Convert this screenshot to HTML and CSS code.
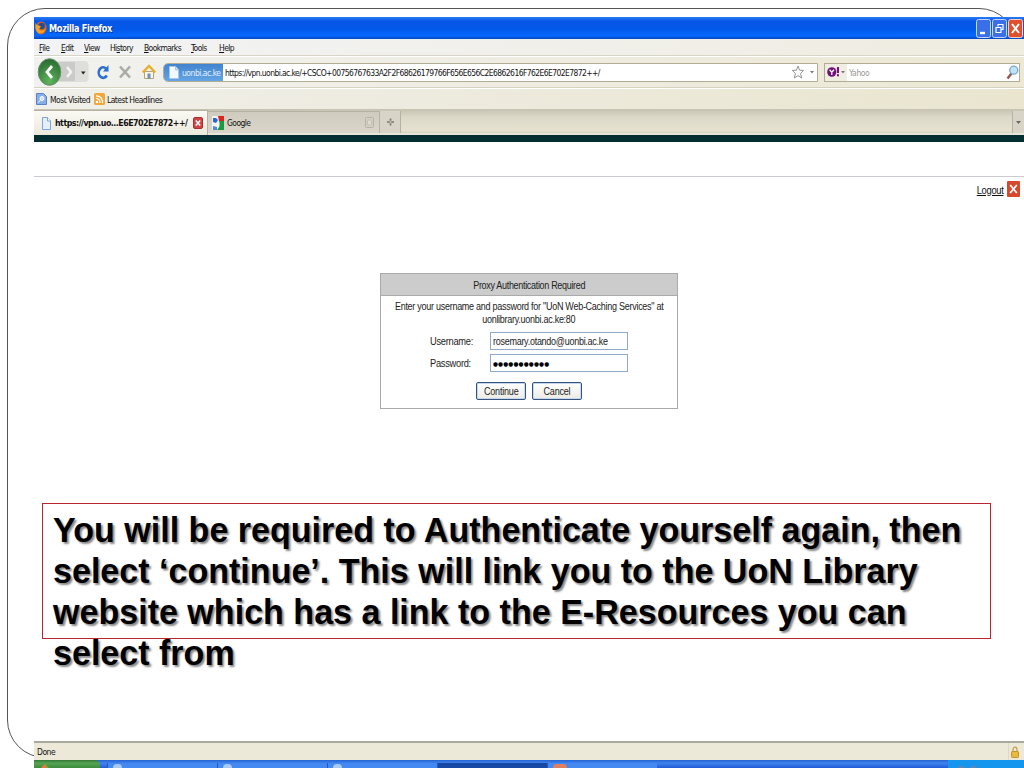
FILE: index.html
```
<!DOCTYPE html>
<html>
<head>
  <meta charset="utf-8">
  <title>Mozilla Firefox</title>
  <link rel="stylesheet" href="styles.css">
</head>
<body>
<div class="frame"></div>
<div class="window">

  <div class="titlebar">
    <svg class="fox" width="12" height="14" viewBox="0 0 12 14"><ellipse cx="6" cy="7" rx="5.600" ry="6.500" fill="#d8661a"/><circle cx="6.600" cy="5" r="3.300" fill="#284a98"/><path d="M.5 2q1 3 3.500 2.500l2 1-2 2.500q2 3 6.500 0-1.500 4.500-6 4.500Q-.5 11 .5 2z" fill="#f6a623"/></svg>
    <span class="t title">Mozilla Firefox</span>
    <div class="winbtns">
      <svg width="15" height="19" viewBox="0 0 15 19"><rect x=".5" y=".5" width="14" height="18" rx="2" fill="#3b6fe8" stroke="#c5d5fa"/><path d="M4 14h5" stroke="#fff" stroke-width="2.400"/></svg>
      <svg width="15" height="19" viewBox="0 0 15 19"><rect x=".5" y=".5" width="14" height="18" rx="2" fill="#3b6fe8" stroke="#c5d5fa"/><path d="M6 7.500V5.500h5v5H9.500M4 8.500h5v5H4z" fill="none" stroke="#fff" stroke-width="1.200"/></svg>
      <svg width="15" height="19" viewBox="0 0 15 19"><rect x=".5" y=".5" width="14" height="18" rx="2" fill="#e0502c" stroke="#f4d0c4"/><path d="M4 5l7 9M11 5l-7 9" stroke="#fff" stroke-width="2"/></svg>
    </div>
  </div>

  <div class="menu">
    <span class="t m1"><u>F</u>ile</span>
    <span class="t m2"><u>E</u>dit</span>
    <span class="t m3"><u>V</u>iew</span>
    <span class="t m4">Hi<u>s</u>tory</span>
    <span class="t m5"><u>B</u>ookmarks</span>
    <span class="t m6"><u>T</u>ools</span>
    <span class="t m7"><u>H</u>elp</span>
  </div>

  <div class="nav">
    <svg class="backfwd" width="54" height="28" viewBox="0 0 54 28">
      <defs><radialGradient id="g" cx=".5" cy=".85" r=".8"><stop offset="0" stop-color="#5fb55c"/><stop offset="1" stop-color="#2a6e33"/></radialGradient></defs>
      <rect x="14" y="3" width="39.500" height="21" rx="4" fill="#dededb"/>
      <rect x="22" y="4" width="18" height="19" fill="#cbcbc9"/>
      <path d="M32 9l4 5-4 5" fill="none" stroke="#f4f4f2" stroke-width="2.500"/>
      <path d="M46 13.500h4.500L48.200 16.500z" fill="#222"/>
      <ellipse cx="14.500" cy="14" rx="11.300" ry="13.300" fill="url(#g)" stroke="#6d8f6e"/>
      <path d="M17 8l-5 6 5 6" fill="none" stroke="#fff" stroke-width="2.800"/>
    </svg>
    <svg class="reload" width="14" height="16" viewBox="0 0 14 16"><path d="M10.800 11.500A4.400 5.300 0 1 1 10 4.500" fill="none" stroke="#2c6fd0" stroke-width="2.600"/><path d="M12.500 1v6.500H7z" fill="#2c6fd0"/></svg>
    <svg class="stop" width="12" height="14" viewBox="0 0 12 14"><path d="M1 1.500l10 11M11 1.500l-10 11" stroke="#aaaaa6" stroke-width="2.600"/></svg>
    <svg class="home" width="14" height="16" viewBox="0 0 14 16"><path d="M2.500 7.500h9v7h-9z" fill="#fdf6dc" stroke="#b3a378"/><path d="M.8 8.500L7 2l6.200 6.500" fill="none" stroke="#e5b02f" stroke-width="2.400"/><path d="M5.500 9.500h3v5h-3z" fill="#6990c8"/></svg>
    <div class="url">
      <div class="site">
        <svg width="10" height="13" viewBox="0 0 10 13"><path d="M.5.5h6l3 3.500v8.500h-9z" fill="#f3f8ff" stroke="#a7c5ea"/><path d="M6.500.5v3.500h3" fill="#cfe0f6" stroke="#a7c5ea"/></svg>
        <span class="t domain">uonbi.ac.ke</span>
      </div>
      <span class="t address">https://vpn.uonbi.ac.ke/+CSCO+00756767633A2F2F68626179766F656E656C2E6862616F762E6E702E7872++/</span>
      <svg class="star" width="25" height="14" viewBox="0 0 25 14"><path d="M6 1l1.600 4.200 4.100.2-3.100 3 1 4.600L6 10.600 2.400 13l1-4.600-3.100-3 4.100-.2z" fill="#fff" stroke="#888" stroke-width=".9"/><path d="M18 6h4l-2 2.600z" fill="#777"/></svg>
    </div>
    <div class="search">
      <div class="engine">
        <svg width="18" height="12" viewBox="0 0 18 12"><ellipse cx="4.800" cy="6" rx="4.600" ry="4.800" fill="#71107d"/><path d="M2.600 3.800l2.200 2.400 2.200-2.400M4.800 6v3" stroke="#fff" stroke-width="1.300" fill="none"/><path d="M11 1v6M11 8.300v2" stroke="#71107d" stroke-width="2"/><path d="M14 5h4l-2 2.600z" fill="#777"/></svg>
      </div>
      <span class="t yahoo">Yahoo</span>
      <svg class="lens" width="13" height="15" viewBox="0 0 13 15"><path d="M5.500 8.500L1.500 13.500" stroke="#96594a" stroke-width="2.500"/><circle cx="7.800" cy="5.200" r="4" fill="#bfe3f8" stroke="#7aa6c9" stroke-width="1.300"/></svg>
    </div>
  </div>

  <div class="bookmarks">
    <svg width="11" height="12" viewBox="0 0 11 12"><path d="M.5.5h7l3 3v8H.5z" fill="#88aee8" stroke="#5b82c6"/><circle cx="6" cy="5.500" r="2" fill="#cfe0fb" stroke="#fff"/><path d="M4.500 7L2.500 9.500" stroke="#fff"/></svg>
    <span class="t visited">Most Visited</span>
    <svg width="11" height="12" viewBox="0 0 11 12"><rect width="11" height="12" rx="1.500" fill="#f0a83c"/><circle cx="3" cy="9" r="1.200" fill="#fff"/><path d="M2 5.500q4 0 4 4.500M2 2.800q6.600 0 6.600 7.200" fill="none" stroke="#fff" stroke-width="1.200"/></svg>
    <span class="t headlines">Latest Headlines</span>
  </div>

  <div class="tabs">
    <div class="tab active">
      <svg width="9" height="13" viewBox="0 0 9 13"><path d="M.5.5h5l3 3.500v8.500h-8z" fill="#e4effc" stroke="#7fa5d8"/><path d="M5.500.5v3.500h3" fill="#fff" stroke="#7fa5d8"/></svg>
      <span class="t tabname">https://vpn.uo...E6E702E7872++/</span>
      <svg width="10" height="12" viewBox="0 0 10 12"><rect x=".5" y=".5" width="9" height="11" rx="1.500" fill="#cf4444" stroke="#a92f35"/><path d="M2.800 3.500l4.400 5M7.200 3.500l-4.400 5" stroke="#fff" stroke-width="1.500"/></svg>
    </div>
    <div class="tab">
      <svg width="12" height="14" viewBox="0 0 12 14"><rect width="12" height="14" fill="#f4f4f4"/><path d="M6 0h6v5H7z" fill="#d8281f"/><path d="M7 5h5v9H5q4-4 2-9z" fill="#1b9a41"/><path d="M1 2h3l2 2-2 3-3-1z" fill="#2a68cf"/><path d="M1 10l4 1v3H1z" fill="#4c8be0"/></svg>
      <span class="t google">Google</span>
      <svg class="tabclose" width="9" height="11" viewBox="0 0 9 11"><rect x=".5" y=".5" width="8" height="10" rx="1" fill="#d3d0c3" stroke="#b5b2a6"/><rect x="2.500" y="3" width="4" height="5" rx="1" fill="#dedbd0" stroke="#c2bfb3"/></svg>
    </div>
    <div class="newtab"><svg width="7" height="8" viewBox="0 0 7 8"><path d="M3.500.5v7M0 4h7" stroke="#77756c" stroke-width="1.600"/><path d="M3.500 2.500v3M2 4h3" stroke="#dddacd" stroke-width=".6"/></svg></div>
    <div class="tablist"><svg width="5" height="3" viewBox="0 0 5 3"><path d="M0 0h5L2.500 3z" fill="#666"/></svg></div>
  </div>

  <div class="page">
    <div class="band"></div>
    <div class="header"></div>
    <div class="logout">
      <a class="t">Logout</a>
      <svg width="13" height="16" viewBox="0 0 13 16"><rect width="13" height="16" rx="1" fill="#d5492f"/><path d="M3.200 4l6.600 8M9.800 4l-6.600 8" stroke="#fff" stroke-width="1.700"/></svg>
    </div>

    <div class="login">
      <div class="login-title"><span class="t">Proxy Authentication Required</span></div>
      <div class="login-text"><span class="t">Enter your username and password for "UoN Web-Caching Services" at</span><br><span class="t">uonlibrary.uonbi.ac.ke:80</span></div>
      <div class="row"><span class="t label">Username:</span><div class="field"><span class="t">rosemary.otando@uonbi.ac.ke</span></div></div>
      <div class="row"><span class="t label">Password:</span><div class="field"><span class="t dots">●●●●●●●●●●●</span></div></div>
      <div class="buttons"><div class="btn"><span class="t">Continue</span></div><div class="btn"><span class="t">Cancel</span></div></div>
    </div>

    <div class="callout">
      <span>You will be required to Authenticate yourself again, then</span>
      <span>select ‘continue’. This will link you to the UoN Library</span>
      <span>website which has a link to the E-Resources you can</span>
      <span>select from</span>
    </div>
  </div>

  <div class="status">
    <span class="t">Done</span>
    <div class="lock"><svg width="8" height="12" viewBox="0 0 8 12"><path d="M2 6V3.500a2 2.300 0 0 1 4 0V6" fill="none" stroke="#c9a145" stroke-width="1.300"/><rect x=".5" y="5.500" width="7" height="6" rx=".8" fill="#e9b93c" stroke="#c3922b"/></svg></div>
  </div>

  <div class="taskbar">
    <div class="start"><svg width="9" height="4" viewBox="0 0 9 4"><path d="M0 4l2-2.500L5 0v4z" fill="#e8773a"/><path d="M5 4V1l3 3z" fill="#79a83c"/></svg></div>
    <div class="task"><i></i></div>
    <div class="task"><i></i></div>
    <div class="task"><i></i></div>
    <div class="task current"></div>
    <div class="task ff"><i></i></div>
    <div class="tray"><i></i><i></i></div>
  </div>
</div>
</body>
</html>
```

FILE: styles.css
```
* { box-sizing: border-box; }
body { margin: 0; width: 1024px; height: 768px; overflow: hidden; background: #fff; color: #111; font-family: "DejaVu Sans Condensed", "DejaVu Sans", sans-serif; font-size: 9px; position: relative; }
svg { display: block; flex: none; }
/* the window is squeezed sideways, so its text is narrower than the font */
.t { white-space: nowrap; display: inline-block; flex: none; transform: scaleX(0.94); transform-origin: left center; }

/* rounded outline of the slide, runs behind the window */
.frame { position: absolute; left: 7px; top: 8px; width: 1010px; height: 750px; border: 1px solid #555; border-radius: 38px; }
.window { position: relative; margin: 0 0 0 34px; top: 17px; width: 990px; height: 751px; display: flex; flex-direction: column; background: #fff; }

.titlebar { height: 22px; flex: none; display: flex; align-items: center; padding: 0 1px; background: linear-gradient(#2a7bf5 0, #0656e6 20%, #0459ea 55%, #0668ff 85%, #0347c0 100%); }
.title { color: #fff; font-weight: bold; font-size: 10px; margin-left: 2px; letter-spacing: -0.35px; text-shadow: 1px 1px 0 #0a3a9c; transform: scaleX(0.91); }
.winbtns { margin-left: auto; display: flex; gap: 1px; }

.menu { height: 17px; flex: none; display: flex; align-items: center; padding: 2px 0 0 5px; background: linear-gradient(90deg, #f2f3f5, #efece0); border-bottom: 1px solid #d8d5c6; letter-spacing: -0.65px; }
.m1 { width: 22px; }
.m2 { width: 23px; }
.m3 { width: 26px; }
.m4 { width: 34px; }
.m5 { width: 47px; }
.m6 { width: 28px; }

.nav { height: 32px; flex: none; display: flex; align-items: center; padding-right: 4px; border-top: 1px solid #fff; border-bottom: 1px solid #d5d2c2; background: linear-gradient(90deg, #f1f1ef, #ece8d4); }
.backfwd { margin-left: 1px; }
.reload { margin-left: 7px; }
.stop { margin-left: 9px; }
.home { margin-left: 11px; }
.url { height: 19px; width: 656px; margin-left: 7px; display: flex; align-items: center; background: #fff; border: 1px solid #b3ac92; border-radius: 5px 0 0 5px; overflow: hidden; }
.site { width: 59px; height: 19px; flex: none; display: flex; align-items: center; padding-left: 5px; background: linear-gradient(#3f82cd, #65a7e6); color: #e3f0ff; }
.domain { margin: 2px 0 0 3px; letter-spacing: -0.5px; }
.address { margin: 2px 0 0 2px; letter-spacing: -0.62px; }
.star { margin-left: auto; margin-right: 0; }
.search { height: 19px; width: 196px; margin-left: 6px; display: flex; align-items: center; background: #fff; border: 1px solid #b3ac92; }
.engine { height: 17px; width: 22px; padding-left: 2px; display: flex; align-items: center; background: #f0ede3; }
.yahoo { color: #999; margin: 2px 0 0 2px; letter-spacing: -0.4px; }
.lens { margin-left: auto; }

.bookmarks { height: 21px; flex: none; display: flex; align-items: center; padding-left: 2px; border-top: 1px solid #fff; background: linear-gradient(90deg, #f0efe9, #e9e5cf); }
.visited { width: 44px; margin: 2px 0 0 3px; letter-spacing: -0.55px; }
.headlines { margin: 2px 0 0 2px; letter-spacing: -0.55px; }

.tabs { height: 26px; flex: none; display: flex; align-items: flex-start; border-bottom: 2px solid #e9e6d9; background: linear-gradient(#c5c2b2, #dcd9c9 35%, #e6e2d0 90%, #d8d4c3); background-clip: padding-box; }
.tab { height: 22px; width: 172px; margin-top: 2px; display: flex; align-items: center; padding: 0 5px 0 4px; background: linear-gradient(#cfccbf, #dad7ca); border: 1px solid #b5b2a3; border-width: 1px 1px 0 0; }
.active { height: 25px; width: 174px; margin-top: 1px; padding: 0 0 0 8px; background: linear-gradient(#faf9f4, #ece9dc); }
.tabname { width: 134px; font-weight: bold; margin: 0 4px 0 4px; letter-spacing: -0.52px; transform: scaleX(0.975); }
.google { margin-left: 3px; letter-spacing: -0.6px; }
.tabclose { margin-left: auto; }
.newtab { height: 22px; width: 21px; margin-top: 2px; display: flex; align-items: center; justify-content: center; background: #d8d5c8; border-right: 1px solid #b5b2a3; }
.tablist { height: 22px; width: 12px; margin: 2px 0 0 auto; display: flex; align-items: center; justify-content: center; background: #d8d5c8; border-left: 1px solid #b5b2a3; }

.page { flex: 1; min-height: 0; display: flex; flex-direction: column; font-family: "Liberation Sans", Arial, sans-serif; }
.band { height: 7px; flex: none; background: #032f33; }
.header { height: 35px; flex: none; border-bottom: 1px solid #c9cbd0; }
.logout { height: 24px; flex: none; display: flex; align-items: center; justify-content: flex-end; gap: 4px; padding-right: 4px; font-size: 10px; letter-spacing: -0.35px; text-decoration: underline; }
.logout .t { transform-origin: right center; margin-top: 2px; }

.login { width: 298px; height: 136px; flex: none; margin: 72px 0 0 346px; border: 1px solid #aaa; font-size: 10px; color: #222; }
.login .t { transform: scaleX(0.9); transform-origin: center; }
.login-title { height: 22px; display: flex; align-items: center; justify-content: center; padding-top: 1px; background: #ccc; border-bottom: 1px solid #aaa; letter-spacing: -0.35px; }
.login-text { margin: 0 -10px; padding-top: 4px; height: 36px; line-height: 13px; text-align: center; letter-spacing: -0.3px; }
.row { display: flex; align-items: center; height: 18px; margin-bottom: 4px; padding-left: 49px; }
.row .t { transform-origin: left center; }
.login .label { width: 60px; letter-spacing: -0.3px; transform: scaleX(0.93); }
.field { width: 138px; height: 18px; padding-left: 2px; display: flex; align-items: center; border: 1px solid #8fa9c6; background: #fff; letter-spacing: -0.3px; }
.login .dots { font-family: "DejaVu Sans", sans-serif; font-size: 6px; letter-spacing: 0.15px; color: #000; margin-top: 1px; transform: scaleX(0.95); }
.buttons { display: flex; gap: 6px; padding: 6px 0 0 95px; }
.btn { width: 50px; height: 18px; display: flex; align-items: center; justify-content: center; padding-top: 1px; border: 1px solid #33557d; border-radius: 2px; background: linear-gradient(#fff, #ecebe5); box-shadow: inset 0 0 0 1px #c5d6ee; letter-spacing: -0.2px; }

.callout { width: 949px; height: 136px; flex: none; margin: 94px 0 0 8px; padding: 5px 0 0 10px; border: 1px solid #bb2530; color: #000; font-size: 35px; line-height: 41px; font-weight: bold; white-space: nowrap; text-shadow: 2px 2px 2px #888; }
.callout span { display: block; transform: scaleX(0.973); transform-origin: left center; }

.status { height: 19px; flex: none; display: flex; align-items: center; padding: 0 3px; background: #ece9d8; border-top: 2px solid #aaa99f; letter-spacing: -0.5px; }
.lock { margin-left: auto; height: 17px; width: 13px; display: flex; align-items: center; justify-content: center; border-left: 1px solid #dcd8c6; }

.taskbar { height: 8px; flex: none; display: flex; align-items: flex-end; overflow: hidden; background: linear-gradient(#2464d2, #3f83ee 40%, #225ad6); }
.start { height: 8px; width: 66px; margin-right: 7px; padding: 4px 0 0 7px; border-radius: 0 5px 0 0; background: linear-gradient(#34763a, #55a452 40%, #3b8b3b); }
.task { height: 5px; width: 110px; padding: 1px 0 0 5px; border-left: 1px solid #2559bd; background: #4489f2; }
.task i { display: block; width: 9px; height: 8px; border-radius: 4px; background: #a8c9f4; }
.current { background: #1748a5; }
.ff i { width: 14px; background: #df8060; }
.tray { height: 8px; width: 76px; margin-left: auto; padding: 6px 0 0 10px; display: flex; gap: 5px; background: #1496ee; }
.tray i { width: 7px; height: 5px; border-radius: 3px; background: #5b89b4; }
```
